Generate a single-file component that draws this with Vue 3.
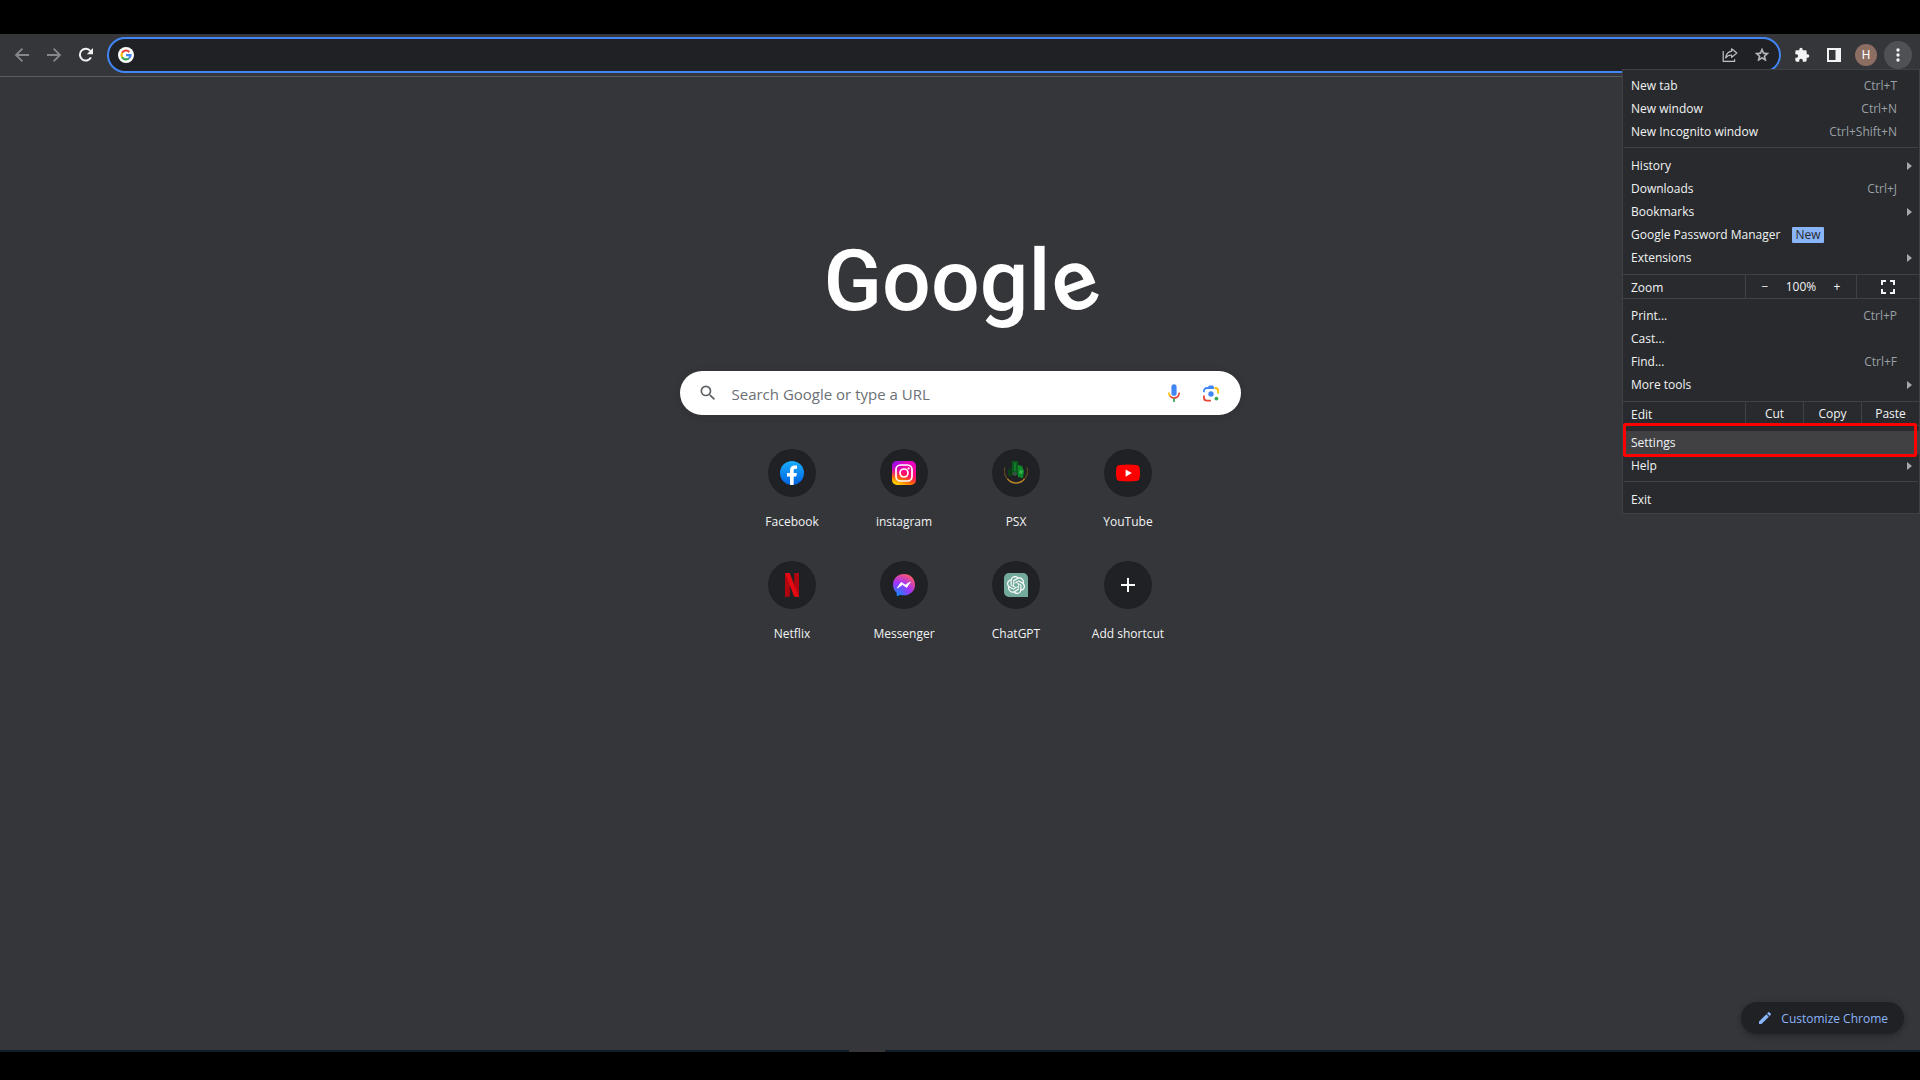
<template>
  <div class="screen">
    <div class="browser">

      <header class="toolbar">
        <button class="tool dim" aria-label="Back">
          <svg width="16" height="16" viewBox="0 0 16 16" fill="none" stroke="currentColor" stroke-width="1.8">
            <path d="M15 8H2.4M8.4 1.6L2 8l6.4 6.4"/>
          </svg>
        </button>
        <button class="tool dim" aria-label="Forward">
          <svg width="16" height="16" viewBox="0 0 16 16" fill="none" stroke="currentColor" stroke-width="1.8">
            <path d="M1 8h12.6M7.6 1.6L14 8l-6.4 6.4"/>
          </svg>
        </button>
        <button class="tool" aria-label="Reload">
          <svg width="16" height="16" viewBox="0 0 16 16">
            <path d="M13 10.4A5.9 5.9 0 1 1 12.4 4" fill="none" stroke="currentColor" stroke-width="2"/>
            <path d="M15 1v6.2H8.8z" fill="currentColor"/>
          </svg>
        </button>

        <div class="omnibox">
          <svg width="16" height="16" viewBox="0 0 16 16">
            <circle cx="8" cy="8" r="8" fill="#fff"/>
            <g fill="none" stroke-width="2.2">
              <path d="M4.1 5.8A4.5 4.5 0 0 1 11.3 4.9" stroke="#ea4335"/>
              <path d="M4.1 10.2A4.5 4.5 0 0 1 4.1 5.8" stroke="#fbbc05"/>
              <path d="M11 11.3A4.5 4.5 0 0 1 4.1 10.2" stroke="#34a853"/>
              <path d="M8 8.2h4.5A4.5 4.5 0 0 1 11 11.3" stroke="#4285f4"/>
            </g>
          </svg>
          <input type="text" aria-label="Address and search bar">
          <button class="tool soft" aria-label="Share this page">
            <svg width="16" height="16" viewBox="0 0 16 16" fill="none" stroke="currentColor" stroke-width="1.2">
              <path d="M1.2 4v10.4h11.4v-2.2"/>
              <path d="M9.6 1.8L14.8 6 9.6 10.4V8C6.8 8 5 8.9 3.7 10.9 4.2 7.4 6 4.7 9.6 4.2z" stroke-linejoin="round"/>
            </svg>
          </button>
          <button class="tool soft" aria-label="Bookmark this tab">
            <svg width="16" height="16" viewBox="0 0 24 24" fill="currentColor">
              <path d="M22 9.24l-7.19-.62L12 2 9.19 8.63 2 9.24l5.46 4.73L5.82 21 12 17.27 18.18 21l-1.63-7.03L22 9.24zM12 15.4l-3.76 2.27 1-4.28-3.32-2.88 4.38-.38L12 6.1l1.71 4.04 4.38.38-3.32 2.88 1 4.28L12 15.4z" stroke="currentColor" stroke-width="0.8"/>
            </svg>
          </button>
        </div>

        <button class="tool" aria-label="Extensions">
          <svg width="16" height="16" viewBox="0 0 24 24" fill="currentColor">
            <path d="M20.5 11H19V7a2 2 0 0 0-2-2h-4V3.5a2.5 2.5 0 0 0-5 0V5H4a2 2 0 0 0-2 2v3.8h1.5a2.7 2.7 0 0 1 0 5.4H2V20a2 2 0 0 0 2 2h3.8v-1.500a2.700 2.700 0 0 1 5.400 0V22H17a2 2 0 0 0 2-2v-4h1.500a2.500 2.500 0 0 0 0-5z"/>
          </svg>
        </button>
        <button class="tool" aria-label="Side panel">
          <svg width="14" height="14" viewBox="0 0 14 14">
            <path d="M1 1h12v12H1z" fill="none" stroke="currentColor" stroke-width="2"/>
            <path d="M8.5 1H13v12H8.5z" fill="currentColor"/>
          </svg>
        </button>
        <button class="tool" aria-label="Profile"><span class="avatar">H</span></button>
        <button class="tool open" aria-label="Customize and control">
          <svg width="4" height="14" viewBox="0 0 4 14" fill="currentColor">
            <circle cx="2" cy="2" r="1.7"/>
            <circle cx="2" cy="7" r="1.7"/>
            <circle cx="2" cy="12" r="1.7"/>
          </svg>
        </button>

        <nav class="menu">
          <template v-for="(group, i) in menu" :key="i">
            <hr v-if="group.line">
            <div v-if="group.zoom" class="strip">
              <span class="strip-label">Zoom</span>
              <div class="zoom-box">
                <button aria-label="Zoom out">−</button>
                <span>100%</span>
                <button aria-label="Zoom in">+</button>
              </div>
              <button class="full" aria-label="Full screen">
                <svg width="14" height="14" viewBox="0 0 14 14" fill="none" stroke="currentColor" stroke-width="2">
                  <path d="M1 5V1h4M9 1h4v4M13 9v4H9M5 13H1V9"/>
                </svg>
              </button>
            </div>
            <div v-if="group.edit" class="strip">
              <span class="strip-label">Edit</span>
              <button v-for="name in group.edit" :key="name" class="cell">{{ name }}</button>
            </div>
            <button
              v-for="item in group.items"
              :key="item.label"
              class="item"
              :class="{ marked: item.marked }"
            >
              <span>{{ item.label }}</span>
              <span v-if="item.badge" class="badge">{{ item.badge }}</span>
              <span v-if="item.keys" class="keys">{{ item.keys }}</span>
              <svg v-if="item.sub" class="arrow" width="5" height="8" viewBox="0 0 5 8" fill="currentColor">
                <path d="M0 0l5 4-5 4z"/>
              </svg>
            </button>
          </template>
        </nav>
      </header>

      <main class="page">
        <h1 class="wordmark">Googl<span class="tilt">e</span></h1>

        <form class="search" @submit.prevent>
          <svg width="20" height="20" viewBox="0 0 24 24" fill="#5f6368">
            <path d="M15.5 14h-.79l-.28-.27A6.47 6.47 0 0 0 16 9.5 6.5 6.5 0 1 0 9.5 16c1.61 0 3.09-.59 4.23-1.57l.27.28v.79l5 4.99L20.49 19l-4.99-5zm-6 0C7.010 14 5 11.990 5 9.500S7.010 5 9.500 5 14 7.010 14 9.500 11.990 14 9.500 14z"/>
          </svg>
          <input v-model="query" type="text" placeholder="Search Google or type a URL" aria-label="Search Google or type a URL">
          <button type="button" aria-label="Search by voice">
            <svg width="20" height="20" viewBox="0 0 20 20" fill="none">
              <rect x="7.4" y="1.2" width="5.2" height="11.6" rx="2.6" fill="#4285f4"/>
              <path d="M4.9 9.6c0 1.700.5 2.900 1.500 3.900" stroke="#fbbc05" stroke-width="1.7"/>
              <path d="M6.2 13.3a5.1 5.1 0 0 0 8.9-3.7" stroke="#ea4335" stroke-width="1.7"/>
              <path d="M10 15.2v3.800" stroke="#34a853" stroke-width="1.7"/>
            </svg>
          </button>
          <button type="button" aria-label="Search by image">
            <svg width="20" height="20" viewBox="0 0 20 20" fill="none" stroke-width="1.8">
              <path d="M2.9 9.2V8a3 3 0 0 1 3-3h7" stroke="#4285f4"/>
              <path d="M6.8 4.600l1.200-2h4l1.200 2z" fill="#4285f4"/>
              <path d="M13.500 5h.6a3 3 0 0 1 3 3v2.600" stroke="#fbbc05"/>
              <path d="M2.900 12.600v2a3 3 0 0 0 3 3h4" stroke="#ea4335"/>
              <circle cx="10" cy="11" r="2.700" fill="#4285f4"/>
              <circle cx="15.400" cy="15.600" r="1.900" fill="#34a853"/>
            </svg>
          </button>
        </form>

        <div class="tiles">
          <a v-for="site in sites" :key="site" class="tile" href="#">
            <span class="disc">
              <svg v-if="site === 'Facebook'" width="24" height="24" viewBox="0 0 24 24">
                <defs>
                  <linearGradient id="fb" x1="0" y1="0" x2="0" y2="1">
                    <stop offset="0" stop-color="#19aeff"/>
                    <stop offset="1" stop-color="#0062e0"/>
                  </linearGradient>
                </defs>
                <circle cx="12" cy="12" r="12" fill="url(#fb)"/>
                <path d="M10 23.800V15.500H7v-3.500h3V9.400C10 6.300 11.800 4.600 14.600 4.600c1 0 2.400.2 2.400.2v3h-1.500c-1.400 0-1.800.8-1.800 1.700V12h3.200l-.6 3.500h-2.600v8.300a12 12 0 0 1-3.700 0z" fill="#fff"/>
              </svg>
              <svg v-else-if="site === 'instagram'" width="24" height="24" viewBox="0 0 24 24">
                <defs>
                  <linearGradient id="ig" x1="0.7" y1="0" x2="0.3" y2="1">
                    <stop offset="0" stop-color="#e800c8"/>
                    <stop offset="0.5" stop-color="#ff0a6c"/>
                    <stop offset="0.78" stop-color="#ff6a00"/>
                    <stop offset="1" stop-color="#ffd200"/>
                  </linearGradient>
                  <radialGradient id="ig2" cx="0" cy="0" r="0.7">
                    <stop offset="0" stop-color="#6a10ff"/>
                    <stop offset="1" stop-color="#c800ff" stop-opacity="0"/>
                  </radialGradient>
                </defs>
                <rect width="24" height="24" rx="5" fill="url(#ig)"/>
                <rect width="24" height="24" rx="5" fill="url(#ig2)"/>
                <g fill="none" stroke="#fff" stroke-width="1.7">
                  <rect x="4" y="4" width="16" height="16" rx="4.5"/>
                  <circle cx="12" cy="12" r="4"/>
                </g>
                <circle cx="16.6" cy="7.4" r="1.1" fill="#fff"/>
              </svg>
              <svg v-else-if="site === 'PSX'" width="24" height="24" viewBox="0 0 24 24">
                <path d="M1 6.500A11.600 11.600 0 1 0 23 6.500" fill="none" stroke="#5e4520" stroke-width="1.200"/>
                <path d="M3.500 18a11 11 0 0 0 17 0" fill="none" stroke="#b5802b" stroke-width="1.400"/>
                <path d="M8 0h6v14H8z" fill="#0b5a1c"/>
                <path d="M4 9l4-3v9H4z" fill="#0c3d17"/>
                <path d="M14 4l4 1 2 5-1 7-5-1z" fill="#0f8a2a"/>
                <path d="M16 9l3 1-1 3-3-1z" fill="#35b24a"/>
                <path d="M9 11l4 1-1 3-3-1z" fill="#43514a"/>
                <path d="M10 2h2v8h-2z" fill="#117a2b"/>
              </svg>
              <svg v-else-if="site === 'YouTube'" width="24" height="24" viewBox="0 0 24 24">
                <path d="M4 4q8-1 16 0 3.500.3 3.700 3.500.6 4.500 0 9-.3 3.200-3.700 3.500-8 .8-16 0Q.6 19.700.3 16.500q-.6-4.500 0-9Q.5 4.300 4 4z" fill="#f00"/>
                <path d="M9.600 8.500v7.200l6.200-3.600z" fill="#fff"/>
              </svg>
              <svg v-else-if="site === 'Netflix'" width="24" height="24" viewBox="0 0 24 24">
                <path d="M5 0h4.800v23.500L5 24z" fill="#b1060f"/>
                <path d="M14.200 0H19v24l-4.800-.5z" fill="#b1060f"/>
                <path d="M5 0h4.800L19 24l-4.900-.5z" fill="#e50914"/>
              </svg>
              <svg v-else-if="site === 'Messenger'" width="24" height="24" viewBox="0 0 24 24">
                <defs>
                  <radialGradient id="ms" cx="0.2" cy="1" r="1.1">
                    <stop offset="0" stop-color="#0a8cff"/>
                    <stop offset="0.55" stop-color="#a033ff"/>
                    <stop offset="0.85" stop-color="#e0489a"/>
                    <stop offset="1" stop-color="#ff6068"/>
                  </radialGradient>
                </defs>
                <path d="M12 1C5.700 1 1 5.600 1 11.700c0 3.200 1.300 6 3.500 7.900l.3 2.800c.1.600.6.700 1.100.5l2.600-1.200c1.100.400 2.300.600 3.500.600 6.300 0 11-4.500 11-10.600S18.300 1 12 1z" fill="url(#ms)"/>
                <path d="M5.400 14.900l3.800-5.600 4 2.800 5.200-3.200-3.700 5.500-4.100-2.800z" fill="#fff" stroke="#fff" stroke-width="0.8" stroke-linejoin="round"/>
              </svg>
              <svg v-else-if="site === 'ChatGPT'" width="24" height="24" viewBox="0 0 24 24">
                <path d="M5 0h14a5 5 0 0 1 5 5v19H5a5 5 0 0 1-5-5V5a5 5 0 0 1 5-5z" fill="#74aa9c"/>
                <svg x="3" y="3" width="18" height="18" viewBox="0 0 24 24">
                  <path :d="knot" fill="#fff"/>
                </svg>
              </svg>
              <svg v-else width="24" height="24" viewBox="0 0 24 24">
                <path d="M12 5v14M5 12h14" stroke="#fff" stroke-width="2"/>
              </svg>
            </span>
            <span class="name">{{ site }}</span>
          </a>
        </div>

        <button class="customize">
          <svg width="16" height="16" viewBox="0 0 24 24" fill="currentColor">
            <path d="M3 17.250V21h3.750L17.810 9.940l-3.750-3.750L3 17.250zM20.710 7.040a1 1 0 0 0 0-1.410l-2.340-2.340a1 1 0 0 0-1.410 0l-1.830 1.830 3.750 3.750 1.830-1.830z"/>
          </svg>
          <span>Customize Chrome</span>
        </button>
      </main>

      <div class="taskbar"><span></span></div>
    </div>
  </div>
</template>

<script setup>
import { ref } from 'vue'

const query = ref('')

const menu = [
  {
    items: [
      { label: 'New tab', keys: 'Ctrl+T' },
      { label: 'New window', keys: 'Ctrl+N' },
      { label: 'New Incognito window', keys: 'Ctrl+Shift+N' },
    ],
  },
  {
    line: true,
    items: [
      { label: 'History', sub: true },
      { label: 'Downloads', keys: 'Ctrl+J' },
      { label: 'Bookmarks', sub: true },
      { label: 'Google Password Manager', badge: 'New' },
      { label: 'Extensions', sub: true },
    ],
  },
  {
    zoom: true,
    items: [
      { label: 'Print...', keys: 'Ctrl+P' },
      { label: 'Cast...' },
      { label: 'Find...', keys: 'Ctrl+F' },
      { label: 'More tools', sub: true },
    ],
  },
  {
    edit: ['Cut', 'Copy', 'Paste'],
    items: [
      { label: 'Settings', marked: true },
      { label: 'Help', sub: true },
    ],
  },
  { line: true, items: [{ label: 'Exit' }] },
]

const sites = ['Facebook', 'instagram', 'PSX', 'YouTube', 'Netflix', 'Messenger', 'ChatGPT', 'Add shortcut']

const knot = 'M22.2819 9.8211a5.9847 5.9847 0 0 0-.5157-4.9108 6.0462 6.0462 0 0 0-6.5098-2.9A6.0651 6.0651 0 0 0 4.9807 4.1818a5.9847 5.9847 0 0 0-3.9977 2.9 6.0462 6.0462 0 0 0 .7427 7.0966 5.98 5.98 0 0 0 .511 4.9107 6.051 6.051 0 0 0 6.5146 2.9001A5.9847 5.9847 0 0 0 13.2599 24a6.0557 6.0557 0 0 0 5.7718-4.2058 5.9894 5.9894 0 0 0 3.9977-2.9001 6.0557 6.0557 0 0 0-.7475-7.0729zm-9.022 12.6081a4.4755 4.4755 0 0 1-2.8764-1.0408l.1419-.0804 4.7783-2.7582a.7948.7948 0 0 0 .3927-.6813v-6.7369l2.02 1.1686a.071.071 0 0 1 .038.052v5.5826a4.504 4.504 0 0 1-4.4945 4.4944zm-9.6607-4.1254a4.4708 4.4708 0 0 1-.5346-3.0137l.142.0852 4.783 2.7582a.7712.7712 0 0 0 .7806 0l5.8428-3.3685v2.3324a.0804.0804 0 0 1-.0332.0615L9.74 19.9502a4.4992 4.4992 0 0 1-6.1408-1.6464zM2.3408 7.8956a4.485 4.485 0 0 1 2.3655-1.9728V11.6a.7664.7664 0 0 0 .3879.6765l5.8144 3.3543-2.0201 1.1685a.0757.0757 0 0 1-.071 0l-4.8303-2.7865A4.504 4.504 0 0 1 2.3408 7.872zm16.5963 3.8558L13.1038 8.364 15.1192 7.2a.0757.0757 0 0 1 .071 0l4.8303 2.7913a4.4944 4.4944 0 0 1-.6765 8.1042v-5.6772a.79.79 0 0 0-.407-.667zm2.0107-3.0231l-.142-.0852-4.7735-2.7818a.7759.7759 0 0 0-.7854 0L9.409 9.2297V6.8974a.0662.0662 0 0 1 .0284-.0615l4.8303-2.7866a4.4992 4.4992 0 0 1 6.6802 4.66zM8.3065 12.863l-2.02-1.1638a.0804.0804 0 0 1-.038-.0567V6.0742a4.4992 4.4992 0 0 1 7.3757-3.4537l-.142.0805L8.704 5.459a.7948.7948 0 0 0-.3927.6813zm1.0976-2.3654l2.602-1.4998 2.6069 1.4998v2.9994l-2.5974 1.4997-2.6067-1.4997Z'
</script>

<style>
body {
  background: #000;
}
</style>

<style scoped>
.screen {
  min-height: 100vh;
  box-sizing: border-box;
  padding: 34px 0 28px;
  display: flex;
  flex-direction: column;
  background: #000;
  color: #f1f3f4;
  font-family: "Segoe UI", "Open Sans", "Noto Sans", sans-serif;
  font-size: 12px;
}

.browser {
  flex: 1;
  display: flex;
  flex-direction: column;
  background: #35363a;
}

button,
input {
  padding: 0;
  border: 0;
  outline: 0;
  background: none;
  color: inherit;
  font: inherit;
}

svg {
  display: block;
  flex: none;
}

.toolbar {
  position: relative;
  display: flex;
  align-items: center;
  gap: 4px;
  padding: 3px 8px;
  border-bottom: 1px solid #5b5c60;
}

.tool {
  width: 28px;
  height: 28px;
  flex: none;
  display: flex;
  align-items: center;
  justify-content: center;
  border-radius: 50%;
  color: #f1f3f4;
}

.tool.dim { color: #86878a; }
.tool.soft { color: #bdc1c6; }
.tool.open { background: #505155; }

.omnibox {
  flex: 1;
  height: 36px;
  box-sizing: border-box;
  margin: 0 3px;
  padding: 0 3px 0 9px;
  display: flex;
  align-items: center;
  gap: 4px;
  border: 2px solid #4285f4;
  border-radius: 18px;
  background: #202124;
}

.omnibox input {
  flex: 1;
  min-width: 0;
  font-size: 15px;
}

.avatar {
  width: 22px;
  height: 22px;
  border-radius: 50%;
  background: #8d6e63;
  color: #fff;
  font-family: Roboto, sans-serif;
  line-height: 22px;
  text-align: center;
}

.menu {
  position: absolute;
  top: 35px;
  right: 0;
  z-index: 2;
  width: 298px;
  box-sizing: border-box;
  padding: 4px 0 2px;
  display: flex;
  flex-direction: column;
  border: 1px solid #3f4145;
  background: #292a2d;
}

.menu hr {
  width: calc(100% - 2px);
  height: 1px;
  margin: 4px 1px 6px;
  border: 0;
  background: #3f4145;
}

.item {
  position: relative;
  height: 23px;
  padding: 0 7px 0 8px;
  display: flex;
  align-items: center;
  text-align: left;
}

.item.marked {
  background: #414144;
}

.item.marked::after {
  content: "";
  position: absolute;
  inset: -8px 2px -3px 0;
  z-index: 1;
  border: 3px solid #f00;
  border-radius: 2px;
}

.keys {
  margin-left: auto;
  margin-right: 15px;
  color: #9aa0a6;
}

.arrow {
  margin-left: auto;
  color: #a5a8ac;
}

.badge {
  margin-left: 12px;
  padding: 0 3px;
  border-radius: 1px;
  background: #8ab4f8;
  color: #292a2d;
  line-height: 16px;
}

.strip {
  height: 25px;
  box-sizing: border-box;
  margin: 5px 0;
  display: flex;
  align-items: stretch;
  line-height: 23px;
  border: solid #3f4145;
  border-width: 1px 0;
}

.strip-label {
  width: 114px;
  padding: 1px 0 0 8px;
}

.zoom-box {
  width: 110px;
  display: flex;
  justify-content: space-between;
  border: solid #3f4145;
  border-width: 0 1px;
}

.zoom-box button {
  width: 38px;
}

.full {
  flex: 1;
  display: flex;
  align-items: center;
  justify-content: center;
}

.cell {
  flex: 1;
  border-left: 1px solid #3f4145;
}

.page {
  position: relative;
  flex: 1;
  display: flex;
  flex-direction: column;
  align-items: center;
}

.wordmark {
  margin: 148px 0 0;
  color: #fff;
  font-family: Roboto, "Open Sans", sans-serif;
  font-size: 86px;
  font-weight: 500;
  line-height: 112px;
}

.tilt {
  display: inline-block;
  transform: rotate(-20deg);
}

.search {
  width: 561px;
  height: 44px;
  box-sizing: border-box;
  margin-top: 34px;
  padding: 0 20px 0 18px;
  display: flex;
  align-items: center;
  border-radius: 22px;
  background: #fff;
  box-shadow: 0 1px 6px rgba(32, 33, 36, 0.28);
}

.search input {
  flex: 1;
  height: 100%;
  box-sizing: border-box;
  margin-left: 14px;
  padding-top: 2px;
  color: #202124;
  font-size: 15px;
}

.search input::placeholder {
  color: #6c7075;
  opacity: 1;
}

.search button {
  margin-left: 17px;
}

.tiles {
  margin-top: 34px;
  display: grid;
  grid-template-columns: repeat(4, 112px);
}

.tile {
  height: 112px;
  display: flex;
  flex-direction: column;
  align-items: center;
  gap: 15px;
  color: #f1f3f4;
  text-decoration: none;
}

.disc {
  width: 48px;
  height: 48px;
  display: flex;
  align-items: center;
  justify-content: center;
  border-radius: 50%;
  background: #202124;
}

.name {
  line-height: 20px;
}

.customize {
  position: absolute;
  right: 16px;
  bottom: 16px;
  height: 32px;
  padding: 0 16px;
  display: flex;
  align-items: center;
  gap: 8px;
  border-radius: 16px;
  background: #202124;
  box-shadow: 0 2px 6px rgba(0, 0, 0, 0.3);
  color: #8ab4f8;
}

.taskbar {
  height: 2px;
  background: #131c29;
}

.taskbar span {
  display: block;
  width: 36px;
  height: 2px;
  margin-left: 44.2%;
  background: #35363a;
}
</style>
